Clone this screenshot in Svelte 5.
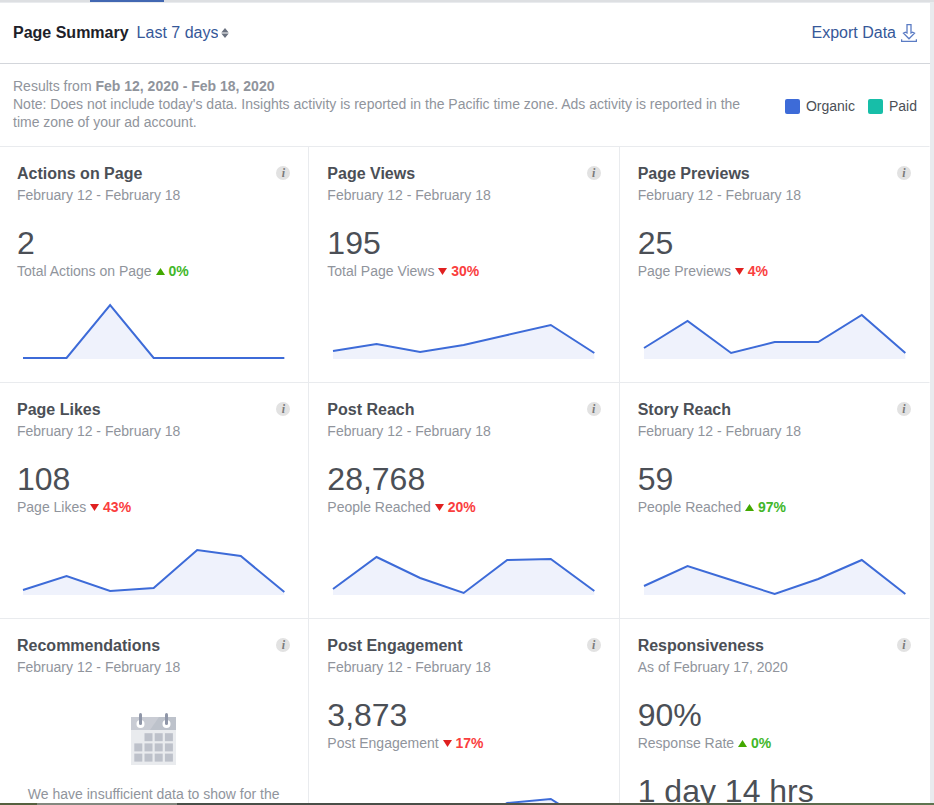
<!--
  @component PageSummary

  Insights overview: header with date range and export, notes with a chart
  legend, and a grid of metric cards with sparklines.
-->
<script>
  const RANGE = 'February 12 - February 18';
  const CHART_HEIGHT = 61;

  const ranges = ['Last 7 days'];
  let selected = $state('Last 7 days');

  // points are heights above the chart baseline, one per day
  const cards = [
    {
      title: 'Actions on Page',
      date: RANGE,
      stats: [{ value: '2', label: 'Total Actions on Page', trend: 'up', change: '0%' }],
      points: [1, 1, 54, 1, 1, 1, 1],
    },
    {
      title: 'Page Views',
      date: RANGE,
      stats: [{ value: '195', label: 'Total Page Views', trend: 'down', change: '30%' }],
      points: [8, 15, 7, 14, 24, 34, 6],
    },
    {
      title: 'Page Previews',
      date: RANGE,
      stats: [{ value: '25', label: 'Page Previews', trend: 'down', change: '4%' }],
      points: [11, 38, 6, 17, 17, 44, 6],
    },
    {
      title: 'Page Likes',
      date: RANGE,
      stats: [{ value: '108', label: 'Page Likes', trend: 'down', change: '43%' }],
      points: [5, 19, 4, 7, 45, 39, 3],
    },
    {
      title: 'Post Reach',
      date: RANGE,
      stats: [{ value: '28,768', label: 'People Reached', trend: 'down', change: '20%' }],
      points: [6, 38, 17, 2, 35, 36, 4],
    },
    {
      title: 'Story Reach',
      date: RANGE,
      stats: [{ value: '59', label: 'People Reached', trend: 'up', change: '97%' }],
      points: [9, 29, 15, 1, 16, 35, 1],
    },
    {
      title: 'Recommendations',
      date: RANGE,
      stats: [],
      empty: 'We have insufficient data to show for the',
    },
    {
      title: 'Post Engagement',
      date: RANGE,
      stats: [{ value: '3,873', label: 'Post Engagement', trend: 'down', change: '17%' }],
      points: [6, 22, 12, 4, 28, 32, 5],
    },
    {
      title: 'Responsiveness',
      date: 'As of February 17, 2020',
      stats: [
        { value: '90%', label: 'Response Rate', trend: 'up', change: '0%' },
        { value: '1 day 14 hrs' },
      ],
    },
  ];

  const line = (points) => points.map((p, i) => `${i},${CHART_HEIGHT - p}`).join(' ');
  const area = (points) =>
    `0,${CHART_HEIGHT} ${line(points)} ${points.length - 1},${CHART_HEIGHT}`;

  // calendar cells, the first one of the month is blank
  const cells = [];
  for (let row = 0; row < 3; row++) {
    for (let col = 0; col < 4; col++) {
      if (row || col) cells.push({ x: 3.3 + col * 10.2, y: 20.2 + row * 10.2 });
    }
  }
</script>

<div class="window">
  <nav class="tabs" aria-label="Page sections">
    <a class="tab" href="#insights" aria-label="Insights"></a>
  </nav>

  <main class="page">
    <header class="header">
      <h1>Page Summary</h1>
      <label class="range">
        <select bind:value={selected} aria-label="Date range">
          {#each ranges as range}
            <option>{range}</option>
          {/each}
        </select>
        <svg width="8" height="10" viewBox="0 0 8 10" aria-hidden="true">
          <path d="M4 0 7.7 4.4H0.3zM4 10 0.3 5.6h7.4z" />
        </svg>
      </label>
      <a class="export" href="#export">
        Export Data
        <svg width="16" height="18" viewBox="0 0 16 18" aria-hidden="true">
          <path d="M6 0.7h4v8.3l1.6-.8 1.9.9L8 14.8 2.5 9.1l1.9-.9 1.6.8z" />
          <path d="M0.6 15.2v2.1h14.8v-2.1" />
        </svg>
      </a>
    </header>

    <section class="notes">
      <p>
        Results from <b>Feb 12, 2020 - Feb 18, 2020</b><br />
        Note: Does not include today's data. Insights activity is reported in the Pacific time zone.
        Ads activity is reported in the time zone of your ad account.
      </p>
      <ul class="legend">
        <li><span class="swatch organic"></span>Organic</li>
        <li><span class="swatch paid"></span>Paid</li>
      </ul>
    </section>

    <section class="grid">
      {#each cards as card}
        <article class="card">
          <div class="card-head">
            <h2>{card.title}</h2>
            <button class="info" type="button" aria-label="About {card.title}">i</button>
          </div>
          <p class="date">{card.date}</p>

          {#each card.stats as stat}
            <p class="value">{stat.value}</p>
            {#if stat.label}
              <p class="label">
                {stat.label}
                <span class="change {stat.trend}">
                  <svg width="9" height="7" viewBox="0 0 9 7" aria-hidden="true">
                    <path d={stat.trend === 'up' ? 'M4.5 0 9 7H0z' : 'M0 0h9L4.5 7z'} />
                  </svg>
                  {stat.change}
                </span>
              </p>
            {/if}
          {/each}

          {#if card.points}
            <svg class="chart" viewBox="0 0 6 {CHART_HEIGHT}" preserveAspectRatio="none" aria-hidden="true">
              <polygon points={area(card.points)} />
              <polyline points={line(card.points)} />
            </svg>
          {/if}

          {#if card.empty}
            <div class="empty">
              <svg width="45" height="52" viewBox="0 0 45 52" aria-hidden="true">
                <path fill="#e9ebee" d="M0 4h45v48H0z" />
                <path fill="#bdc2cb" d="M0 4h45v13H0z" />
                <path fill="#c9ccd4" d="M0 4h28L19 17H0z" />
                <circle cx="9.5" cy="11" r="4" fill="#fff" />
                <circle cx="35.5" cy="11" r="4" fill="#fff" />
                <rect x="8" y="0" width="3" height="12" rx="1.5" fill="#8f96a8" />
                <rect x="34" y="0" width="3" height="12" rx="1.5" fill="#8f96a8" />
                {#each cells as cell}
                  <rect x={cell.x} y={cell.y} width="8" height="8" fill="#bdc1ca" />
                {/each}
              </svg>
              <p>{card.empty}</p>
            </div>
          {/if}
        </article>
      {/each}
    </section>
  </main>

  <footer class="edge"></footer>
</div>

<style>
  :global(body) {
    margin: 0;
    background: #e9ebee;
  }

  h1,
  h2,
  p,
  ul {
    margin: 0;
    padding: 0;
  }

  .window {
    display: flex;
    flex-direction: column;
    height: 100vh;
    overflow: hidden;
    font-family: 'Liberation Sans', Arial, sans-serif;
    font-size: 14px;
    line-height: 18px;
    color: #90949c;
  }

  .tabs {
    flex: none;
    height: 2px;
    padding-left: 90px;
    background: #dddfe2;
    border-bottom: 1px solid #e9ebee;
  }

  .tab {
    display: block;
    width: 74px;
    height: 2px;
    background: #4267b2;
  }

  .page {
    flex: 1;
    min-height: 0;
    margin-right: 4px;
    overflow: hidden;
    background: #fff;
  }

  .header {
    display: flex;
    align-items: center;
    padding: 20px 13px;
    border-bottom: 1px solid #d3d6db;
    font-size: 16px;
    line-height: 20px;
  }

  h1 {
    font-size: 16px;
    color: #1d2129;
  }

  .range {
    display: flex;
    align-items: center;
    gap: 3px;
    margin-left: 8px;
  }

  .range select {
    appearance: none;
    field-sizing: content;
    padding: 0;
    border: 0;
    background: none;
    font: inherit;
    color: #365899;
    cursor: pointer;
  }

  .range svg {
    fill: #6b7280;
  }

  .export {
    display: flex;
    align-items: center;
    gap: 5px;
    margin-left: auto;
    color: #365899;
    text-decoration: none;
  }

  .export svg {
    fill: none;
    stroke: #5b7cc4;
    stroke-width: 1.3;
  }

  .notes {
    display: flex;
    align-items: center;
    gap: 40px;
    padding: 13px 13px 15px;
  }

  .notes p {
    flex: 1;
  }

  .legend {
    display: flex;
    gap: 13px;
    padding-top: 4px;
    list-style: none;
    color: #4b4f56;
  }

  .legend li {
    display: flex;
    align-items: center;
    gap: 6px;
  }

  .swatch {
    width: 15px;
    height: 15px;
    border-radius: 2px;
  }

  .organic {
    background: #3d6bd8;
  }

  .paid {
    background: #17bea8;
  }

  .grid {
    display: grid;
    grid-template-columns: repeat(3, 1fr);
    margin-left: -1px;
  }

  .card {
    padding: 17px 18px 23px;
    border-top: 1px solid #e9ebee;
    border-right: 1px solid #e9ebee;
  }

  .card:nth-child(3n) {
    border-right-color: #fff;
  }

  .card-head {
    display: flex;
    align-items: flex-start;
    justify-content: space-between;
  }

  h2 {
    font-size: 16px;
    line-height: 20px;
    color: #4b4f56;
  }

  .info {
    width: 14px;
    height: 14px;
    margin-top: 2px;
    padding: 0;
    border: 0;
    border-radius: 50%;
    background: #e2e2e2;
    font: italic bold 12px/14px 'Liberation Serif', serif;
    color: #7a7a7a;
    cursor: pointer;
  }

  .date {
    margin-top: 2px;
  }

  .value {
    margin-top: 21px;
    font-size: 32px;
    line-height: 36px;
    color: #4b4f56;
  }

  .label {
    margin-top: 1px;
  }

  .change {
    font-weight: bold;
  }

  .change svg {
    vertical-align: 1px;
    fill: currentColor;
  }

  .up {
    color: #42b72a;
  }

  .up svg {
    fill: #42a800;
  }

  .down {
    color: #fa3e3e;
  }

  .down svg {
    fill: #e02020;
  }

  .chart {
    display: block;
    box-sizing: border-box;
    width: 100%;
    height: 61px;
    margin-top: 18px;
    padding: 0 6px;
    overflow: visible;
  }

  .chart polygon {
    fill: #eff2fc;
  }

  .chart polyline {
    fill: none;
    stroke: #3d6bd8;
    stroke-width: 2;
    vector-effect: non-scaling-stroke;
  }

  .empty {
    display: flex;
    flex-direction: column;
    align-items: center;
    gap: 20px;
    margin-top: 37px;
    padding: 0 8px;
    text-align: center;
  }

  .edge {
    flex: none;
    height: 2px;
    background: linear-gradient(90deg, #55603f 0 4%, #84887f 4% 19%, #4a4f48 19% 45%, #55564a 60%, #5f7550);
  }
</style>
